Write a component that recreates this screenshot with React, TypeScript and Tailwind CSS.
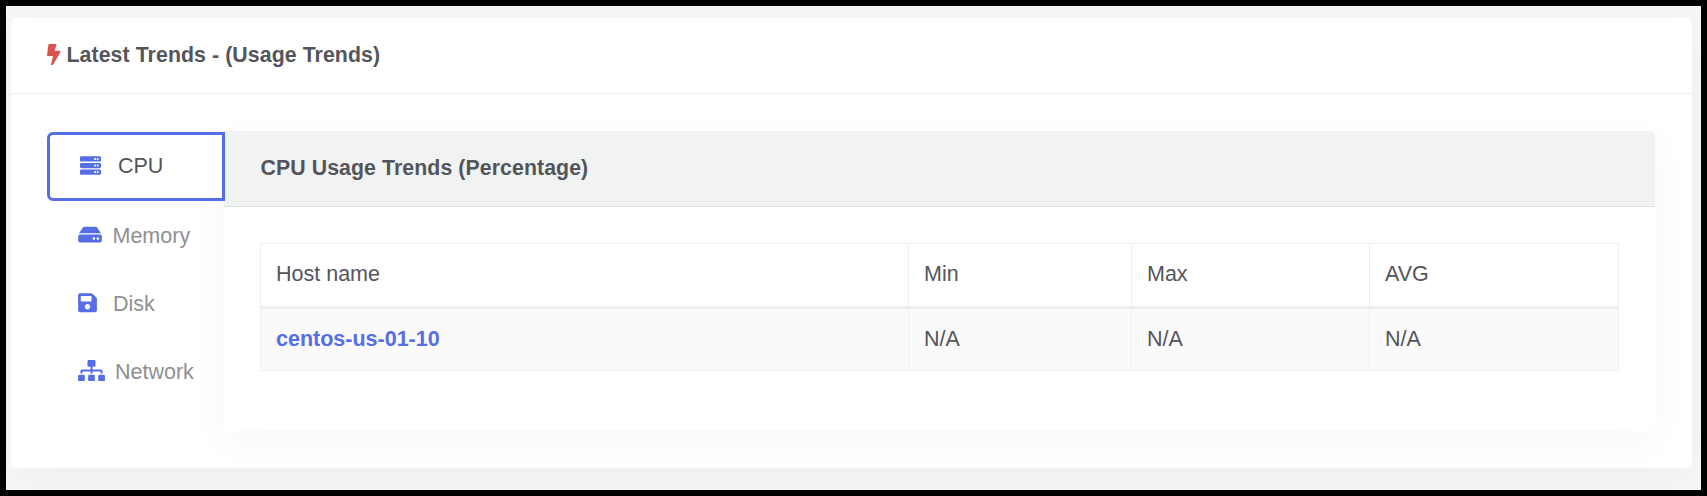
import type { ReactNode } from "react";
import { FaBolt, FaServer, FaHdd, FaSave, FaSitemap } from "react-icons/fa";

type Tab = { label: string; icon: ReactNode };

const tabs: Tab[] = [
  { label: "Memory", icon: <FaHdd className="mr-[10.5px] h-[21px] w-6" /> },
  { label: "Disk", icon: <FaSave className="mr-[16px] h-[21.5px] w-[19px]" /> },
  { label: "Network", icon: <FaSitemap className="mr-[10px] h-[21.5px] w-[27px]" /> },
];

const columns = ["Host name", "Min", "Max", "AVG"];
const rows = [["centos-us-01-10", "N/A", "N/A", "N/A"]];

export default function App() {
  return (
    <div className="h-[496px] w-[1707px] overflow-hidden border-6 border-black bg-[#f6f6f9] pt-3 pl-[5px] font-['Liberation_Sans',Arial,sans-serif] text-[21.5px] leading-8 text-[#54555b]">
      <section className="h-[450px] w-[1681px] rounded-[5px] bg-white shadow-[0_10px_40px_rgba(0,0,0,0.03)]">
        <header className="flex h-[76px] items-center border-b border-[#eeeeee] pb-[2px] pl-9 font-bold">
          <FaBolt className="mr-[6px] h-[21.5px] w-[13.5px] text-[#d9534f]" />
          <h2 className="text-[21.3px] tracking-[0.08px]">Latest Trends - (Usage Trends)</h2>
        </header>
        <div className="flex pt-[37px] pl-9">
          <nav className="relative z-10 mt-px w-[177px]">
            <div className="flex h-[69px] w-[178px] items-center rounded-l-[6px] border-3 border-[#556ee6] bg-white pb-[2px] pl-[30px]">
              <FaServer className="mr-[17px] h-[21px] w-[21px] text-[#556ee6]" />
              CPU
            </div>
            {tabs.map((tab) => (
              <div key={tab.label} className="flex h-[68px] items-center pl-[31px] text-[#8f9092]">
                <span className="pb-px text-[#556ee6]">{tab.icon}</span>
                <span className="pt-px">{tab.label}</span>
              </div>
            ))}
          </nav>
          <article className="h-[300px] w-[1431px] rounded-r-[5px] bg-white shadow-[0_10px_40px_rgba(0,0,0,0.035)]">
            <header className="flex h-[76px] items-center rounded-tr-[5px] border-b border-[#dfe1e1] bg-[#f0f3f2] pb-[2px] pl-[36.5px] font-bold">
              <h3 className="text-[21.3px] tracking-[0.08px]">CPU Usage Trends (Percentage)</h3>
            </header>
            <div className="px-9 pt-9">
              <table className="w-[1359px] table-fixed border-separate border-spacing-0 border-t border-l border-[#eeeeee] text-left">
                <colgroup>
                  <col className="w-[648px]" />
                  <col className="w-[223px]" />
                  <col className="w-[238px]" />
                  <col />
                </colgroup>
                <thead>
                  <tr className="h-[65px]">
                    {columns.map((c) => (
                      <th key={c} className="border-r border-b-3 border-[#eeeeee] pb-[2px] pl-[15px] font-normal">
                        {c}
                      </th>
                    ))}
                  </tr>
                </thead>
                <tbody>
                  {rows.map((row) => (
                    <tr key={row[0]} className="h-[62px] bg-[#fafafa]">
                      {row.map((cell, i) => (
                        <td key={i} className="border-r border-b border-[#eeeeee] pb-[2px] pl-[15px]">
                          {i === 0 ? <a className="font-bold text-[#556ee6]">{cell}</a> : cell}
                        </td>
                      ))}
                    </tr>
                  ))}
                </tbody>
              </table>
            </div>
          </article>
        </div>
      </section>
    </div>
  );
}
